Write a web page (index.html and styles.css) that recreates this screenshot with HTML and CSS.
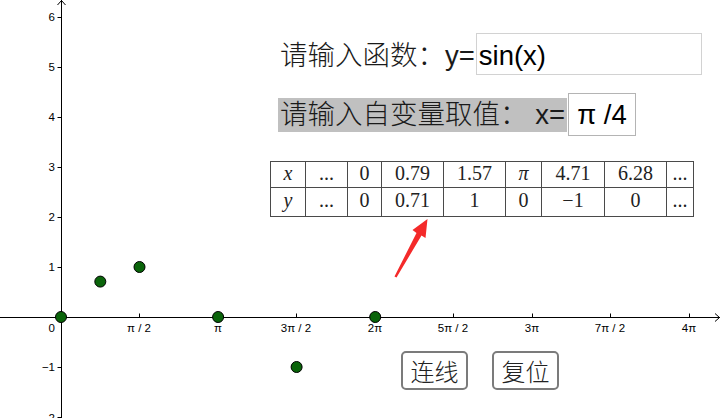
FILE: index.html
```html
<!DOCTYPE html>
<html lang="zh-CN">
<head>
<meta charset="utf-8">
<title>函数取值</title>
<link rel="stylesheet" href="styles.css">
</head>
<body>
<div class="applet">
  <svg class="graph" width="720" height="418" viewBox="0 0 720 418" xmlns="http://www.w3.org/2000/svg">
    <g class="axes" stroke="#000" stroke-width="1" fill="none">
      <line x1="61.5" y1="0" x2="61.5" y2="418"/>
      <line x1="0" y1="317.5" x2="720" y2="317.5"/>
      <polyline points="57.5,5 61.5,0.5 65.5,5"/>
      <polyline points="715,313.5 719.5,317.5 715,321.5"/>
      <line x1="57.5" y1="17.5" x2="61.5" y2="17.5"/>
      <line x1="57.5" y1="67.5" x2="61.5" y2="67.5"/>
      <line x1="57.5" y1="117.5" x2="61.5" y2="117.5"/>
      <line x1="57.5" y1="167.5" x2="61.5" y2="167.5"/>
      <line x1="57.5" y1="217.5" x2="61.5" y2="217.5"/>
      <line x1="57.5" y1="267.5" x2="61.5" y2="267.5"/>
      <line x1="57.5" y1="367.5" x2="61.5" y2="367.5"/>
      <line x1="57.5" y1="417.5" x2="61.5" y2="417.5"/>
      <line x1="139.5" y1="313.5" x2="139.5" y2="317.5"/>
      <line x1="218.5" y1="313.5" x2="218.5" y2="317.5"/>
      <line x1="296.5" y1="313.5" x2="296.5" y2="317.5"/>
      <line x1="375.5" y1="313.5" x2="375.5" y2="317.5"/>
      <line x1="453.5" y1="313.5" x2="453.5" y2="317.5"/>
      <line x1="532.5" y1="313.5" x2="532.5" y2="317.5"/>
      <line x1="610.5" y1="313.5" x2="610.5" y2="317.5"/>
      <line x1="689.5" y1="313.5" x2="689.5" y2="317.5"/>
    </g>
    <g class="tick-labels y-labels" text-anchor="end">
      <text x="55" y="21">6</text>
      <text x="55" y="71">5</text>
      <text x="55" y="121">4</text>
      <text x="55" y="171">3</text>
      <text x="55" y="221">2</text>
      <text x="55" y="271">1</text>
      <text x="55" y="371">−1</text>
      <text x="55" y="422">−2</text>
      <text x="55" y="332">0</text>
    </g>
    <g class="tick-labels x-labels" text-anchor="middle">
      <text x="139" y="332">π / 2</text>
      <text x="218" y="332">π</text>
      <text x="296" y="332">3π / 2</text>
      <text x="375" y="332">2π</text>
      <text x="453" y="332">5π / 2</text>
      <text x="532" y="332">3π</text>
      <text x="610" y="332">7π / 2</text>
      <text x="689" y="332">4π</text>
    </g>
    <g class="points" fill="#0a640a" stroke="#000" stroke-width="1">
      <circle cx="61" cy="317" r="5.5"/>
      <circle cx="100.3" cy="281.6" r="5.5"/>
      <circle cx="139.5" cy="267" r="5.5"/>
      <circle cx="218.1" cy="317" r="5.5"/>
      <circle cx="296.6" cy="367" r="5.5"/>
      <circle cx="375.2" cy="317" r="5.5"/>
    </g>
    <polygon class="pointer" fill="#f42a2a" points="394.5,276.5 416.5,233 412.5,230 427.5,219 425.5,238 421.5,235.5 396.5,277.5"/>
  </svg>

  <div class="widgets">
    <div class="row row-func">
      <span class="label">请输入函数：y=</span>
      <span class="field field-func">sin(x)</span>
    </div>
    <div class="row row-var">
      <span class="label label-hl">请输入自变量取值： x=</span>
      <span class="field field-var">π /4</span>
    </div>
    <div class="values">
      <div class="cell"><i>x</i></div>
      <div class="cell">...</div>
      <div class="cell">0</div>
      <div class="cell">0.79</div>
      <div class="cell">1.57</div>
      <div class="cell"><i>π</i></div>
      <div class="cell">4.71</div>
      <div class="cell">6.28</div>
      <div class="cell">...</div>
      <div class="cell"><i>y</i></div>
      <div class="cell">...</div>
      <div class="cell">0</div>
      <div class="cell">0.71</div>
      <div class="cell">1</div>
      <div class="cell">0</div>
      <div class="cell">−1</div>
      <div class="cell">0</div>
      <div class="cell">...</div>
    </div>
    <div class="actions">
      <button class="btn" type="button">连线</button>
      <button class="btn" type="button">复位</button>
    </div>
  </div>
</div>
</body>
</html>
```

FILE: styles.css
```css
html, body {
  margin: 0;
  padding: 0;
  background: #fff;
}

.applet {
  position: relative;
  width: 720px;
  height: 418px;
  overflow: hidden;
  background: #fff;
}

.graph {
  display: block;
}

.tick-labels {
  font-family: "Liberation Sans", Arial, sans-serif;
  font-size: 11.5px;
  fill: #000;
}

.widgets {
  position: absolute;
  left: 270px;
  top: 33px;
  display: flex;
  flex-direction: column;
  align-items: flex-start;
  font-family: "Liberation Sans", "Noto Sans CJK SC", sans-serif;
  font-size: 27.5px;
  font-weight: 300;
  color: #1a1a1a;
}

.row {
  display: flex;
  white-space: pre;
}

.row-func {
  margin-left: 10px;
  height: 42px;
}

.row-func .label {
  box-sizing: border-box;
  height: 42px;
  padding-top: 4px;
  line-height: 37px;
  margin-right: 1px;
}

.field {
  box-sizing: border-box;
  background: #fff;
  color: #000;
}

.field-func {
  width: 226px;
  height: 42px;
  border: 1px solid #d2d2d2;
  padding: 3px 2px 0;
  line-height: 37px;
}

.row-var {
  margin-top: 18px;
  margin-left: 8px;
  height: 43px;
  align-items: center;
}

.label-hl {
  background: #c0c0c0;
  height: 34px;
  padding: 0 2px;
  line-height: 34px;
}

.field-var {
  width: 68px;
  height: 43px;
  margin-left: 1px;
  border: 1px solid #b4b4b4;
  line-height: 41px;
  text-align: center;
}

.values {
  margin-top: 25px;
  display: grid;
  grid-template-columns: 35px 42px 34px 62px 62px 36px 63px 62px 27px;
  grid-template-rows: 26px 29px;
  border-left: 1px solid #4a4a4a;
  border-top: 1px solid #4a4a4a;
  font-family: "Liberation Serif", "Times New Roman", serif;
  font-size: 20px;
  font-weight: 400;
  color: #222;
}

.cell {
  box-sizing: border-box;
  border-right: 1px solid #4a4a4a;
  border-bottom: 1px solid #4a4a4a;
  display: flex;
  align-items: center;
  justify-content: center;
  padding-bottom: 4px;
  line-height: 1;
}

.actions {
  display: flex;
  gap: 24px;
  margin-top: 134px;
  margin-left: 131px;
}

.btn {
  box-sizing: border-box;
  width: 67px;
  height: 39px;
  padding: 0;
  border: 2px solid #7b7b7b;
  border-radius: 5px;
  background: #fff;
  color: #222;
  font-family: "Noto Sans CJK SC", sans-serif;
  font-size: 24px;
  font-weight: 300;
  line-height: 1;
}
```
